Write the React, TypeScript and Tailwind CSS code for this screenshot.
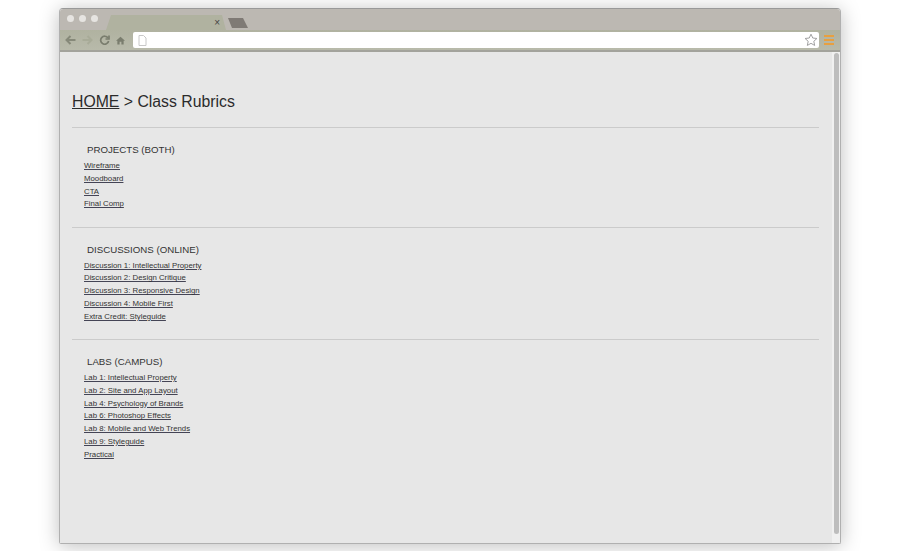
const projects = ["Wireframe", "Moodboard", "CTA", "Final Comp"];
const discussions = [
  "Discussion 1: Intellectual Property",
  "Discussion 2: Design Critique",
  "Discussion 3: Responsive Design",
  "Discussion 4: Mobile First",
  "Extra Credit: Styleguide",
];
const labs = [
  "Lab 1: Intellectual Property",
  "Lab 2: Site and App Layout",
  "Lab 4: Psychology of Brands",
  "Lab 6: Photoshop Effects",
  "Lab 8: Mobile and Web Trends",
  "Lab 9: Styleguide",
  "Practical",
];

function Section({ title, items, pb }: { title: string; items: string[]; pb: string }) {
  return (
    <section className={`border-t border-[#cbcbcb] pt-[15px] ${pb}`}>
      <h2 className="pl-[15px] text-[9.7px] leading-[14px] font-normal text-[#333]">{title}</h2>
      <ul className="mt-[3px] pl-[12px]">
        {items.map((t) => (
          <li key={t} className="h-[12.8px] text-[7.8px] leading-[12.8px] text-[#333]">
            <a className="underline decoration-[#445]">{t}</a>
          </li>
        ))}
      </ul>
    </section>
  );
}

export default function App() {
  return (
    <div className="h-[551px] w-[900px] overflow-hidden bg-white pl-[59px] pt-[8px] font-['Liberation_Sans',Arial,sans-serif]">
      <div className="flex h-[536px] w-[782px] flex-col overflow-hidden rounded-t-[4px] rounded-b-[2px] border border-[#b0b0b0] border-t-[#999999] shadow-[0_2px_20px_rgba(0,0,0,0.26)]">
        <div className="flex h-[21px] shrink-0 items-end bg-[#bcb8b2]">
          <div className="flex h-full items-center gap-[5px] pb-[2px] pl-[7px]">
            <span className="h-[7px] w-[7px] rounded-full bg-[#e6e4e1]" />
            <span className="h-[7px] w-[7px] rounded-full bg-[#e6e4e1]" />
            <span className="h-[7px] w-[7px] rounded-full bg-[#e6e4e1]" />
          </div>
          <div className="ml-[8px] flex h-[15px] w-[120px] items-center justify-end bg-[#b0b2a0] pr-[6px] pt-[1px] [clip-path:polygon(5px_0,calc(100%-4px)_0,100%_100%,0_100%)]">
            <span className="text-[10px] leading-none text-[#444]">×</span>
          </div>
          <div className="mb-[2px] ml-[2px] h-[10px] w-[20px] bg-[#7f7a75] [clip-path:polygon(0_0,75%_0,100%_100%,20%_100%)]" />
        </div>
        <div className="flex h-[20px] shrink-0 items-center bg-gradient-to-b from-[#b0b2a0] to-[#b8baaa]">
          <div className="flex w-[73px] items-center gap-[6px] pl-[5px]">
            <svg width="11" height="10" viewBox="0 0 11 10" fill="none" stroke="#868979" strokeWidth="2"><path d="M10.500 5H2M5.500 1L1.500 5l4 4" /></svg>
            <svg width="11" height="10" viewBox="0 0 11 10" fill="none" stroke="#a8ab98" strokeWidth="2"><path d="M.500 5H9M5.500 1l4 4-4 4" /></svg>
            <svg width="11" height="10" viewBox="0 0 11 10" fill="none" stroke="#7a7d6e" strokeWidth="1.700"><path d="M9 3a4 4 0 1 0 .600 3" /><path d="M10 .500V4H6.500" /></svg>
            <svg width="9" height="9" viewBox="0 0 10 10" fill="#7a7d6e"><path d="M5 .800 0 5.300h1.500V9.500h2.500V6.500h2v3h2.500V5.300H10z" /></svg>
          </div>
          <div className="flex h-[16px] w-[686px] items-center justify-between rounded-[2px] bg-white pl-[5px] pr-[1px]">
            <svg width="9" height="11" viewBox="0 0 9 11" fill="#fff" stroke="#c8c8c8"><path d="M1 .500h4.500L8 3v7.500H1z" /></svg>
            <svg width="14" height="14" viewBox="0 0 24 24" fill="#fff" stroke="#a0a0a0" strokeWidth="1.700"><path d="m12 2 3 6.600 7.200.800-5.400 4.800 1.500 7.100L12 17.700l-6.300 3.600 1.500-7.100L1.800 9.400 9 8.600z" /></svg>
          </div>
          <div className="ml-[5px] flex w-[10px] flex-col gap-[2px]">
            <span className="h-[2px] bg-[#e8a040]" />
            <span className="h-[2px] bg-[#e8a040]" />
            <span className="h-[2px] bg-[#e8a040]" />
          </div>
        </div>
        <div className="flex min-h-0 flex-1 border-t-2 border-[#a3a39c] bg-[#e7e7e7]">
          <main className="min-w-0 flex-1 pl-[12px] pr-[13px] pt-[40px]">
            <h1 className="text-[15.8px] leading-[20px] font-normal text-[#2b2b2b]">
              <a className="underline">HOME</a> &gt; Class Rubrics
            </h1>
            <div className="mt-[15px]">
              <Section title="PROJECTS (BOTH)" items={projects} pb="pb-[15.400px]" />
              <Section title="DISCUSSIONS (ONLINE)" items={discussions} pb="pb-[15.400px]" />
              <Section title="LABS (CAMPUS)" items={labs} pb="pb-0" />
            </div>
          </main>
          <div className="flex w-[8px] shrink-0 justify-center bg-[#f0f0f0] pb-[9px] pt-[1px]">
            <div className="h-full w-[5px] rounded-[3px] bg-[#bdbdbd]" />
          </div>
        </div>
      </div>
    </div>
  );
}
